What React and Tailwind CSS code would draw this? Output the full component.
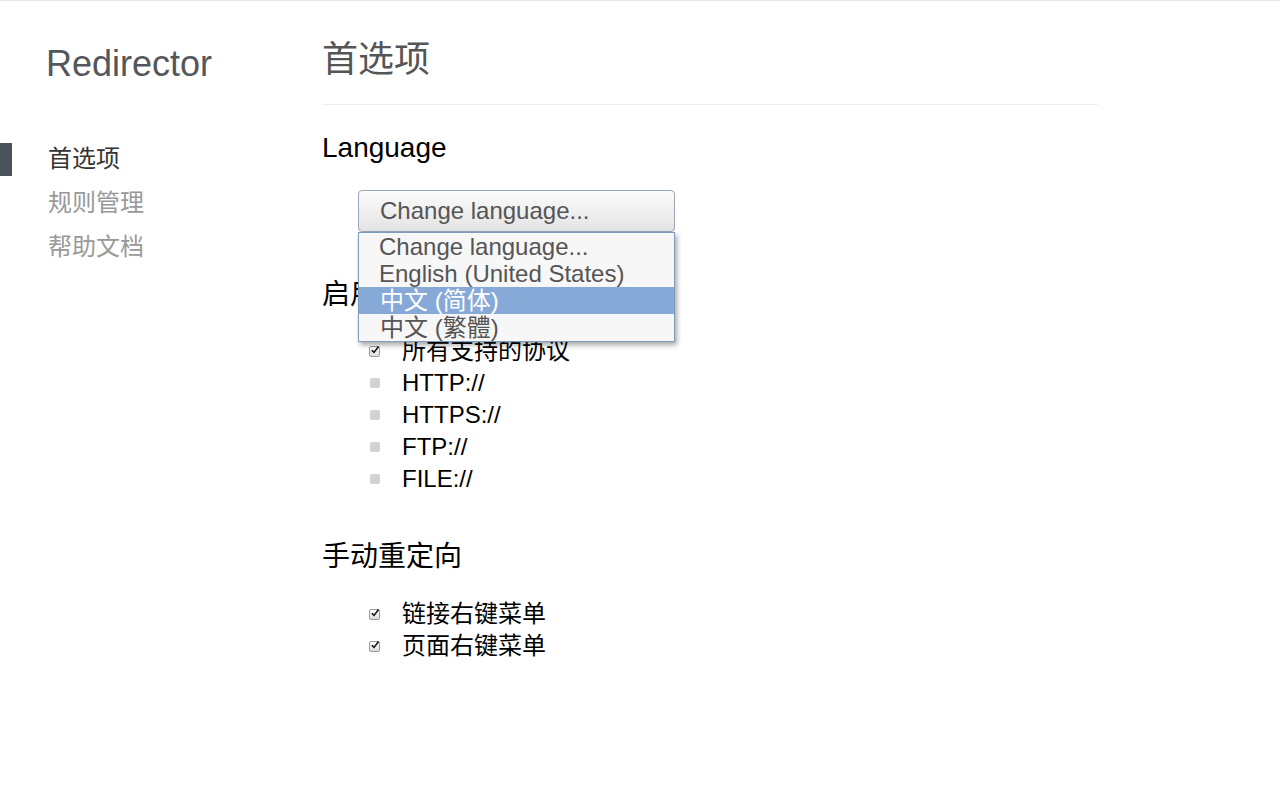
const FONT = { fontFamily: '"Liberation Sans", "Noto Sans CJK SC", Arial, sans-serif' };

const protocols = [
  { label: '所有支持的协议', checked: true },
  { label: 'HTTP://', checked: false },
  { label: 'HTTPS://', checked: false },
  { label: 'FTP://', checked: false },
  { label: 'FILE://', checked: false },
];

const manual = ['链接右键菜单', '页面右键菜单'];

const languages = ['Change language...', 'English (United States)', '中文 (简体)', '中文 (繁體)'];

function CheckBox({ checked }) {
  if (!checked) {
    return <span className="block w-[10px] h-[10px] rounded-[2px] bg-[#d2d2d2]" />;
  }
  return (
    <span className="relative block w-[11px] h-[11px] rounded-[2px] border border-[#9a9a9a] bg-gradient-to-b from-[#ffffff] to-[#dcdcdc]">
      <svg className="absolute -top-[2px] left-0" width="10" height="10" viewBox="0 0 10 10">
        <path d="M1.8 5.2 L4 7.4 L8.6 1.6" fill="none" stroke="#111" strokeWidth="1.6" />
      </svg>
    </span>
  );
}

function NavItem({ active, children }) {
  return (
    <div className="flex items-center h-[44px]">
      <span className={`block w-[12px] h-[33px] ${active ? 'bg-[#4b535c]' : 'bg-transparent'}`} />
      <span className={`ml-[36px] text-[24px] leading-[44px] ${active ? 'text-[#333]' : 'text-[#999]'}`}>
        {children}
      </span>
    </div>
  );
}

function CheckRow({ label, checked }) {
  return (
    <li className="flex items-center h-[32px]">
      <span className="ml-[47px] w-[11px] flex justify-center">
        <CheckBox checked={checked} />
      </span>
      <span className="ml-[22px] text-[24px] leading-[32px] text-black">{label}</span>
    </li>
  );
}

export default function App() {
  return (
    <div className="min-h-[800px] bg-white border-t border-[#e6e6e6] flex" style={FONT}>
      {/* sidebar */}
      <aside className="w-[322px] shrink-0 pt-[43px]">
        <h1 className="pl-[46px] text-[36px] leading-[40px] text-[#53575c]">Redirector</h1>
        <nav className="mt-[53px]">
          <NavItem active>首选项</NavItem>
          <NavItem>规则管理</NavItem>
          <NavItem>帮助文档</NavItem>
        </nav>
      </aside>

      {/* main */}
      <main className="w-[776px] pt-[39px]">
        <h1 className="text-[36px] leading-[40px] text-[#555]">首选项</h1>
        <div className="mt-[24px] h-px bg-[#eeeeee]" />

        <h2 className="mt-[27px] text-[28px] leading-[32px] text-black">Language</h2>
        <div className="relative ml-[36px] mt-[26px] w-[317px]">
          <div className="h-[42px] rounded-[4px] border border-[#9aa6b5] bg-gradient-to-b from-[#fbfbfb] to-[#e4e4e4] pl-[21px] text-[24px] leading-[40px] text-[#555]">
            Change language...
          </div>
          <ul className="absolute left-0 top-[42px] z-10 w-[317px] border border-[#7e9cbc] bg-[#f7f7f7] shadow-[2px_3px_5px_rgba(0,0,0,0.35)]">
            {languages.map((l, i) => (
              <li
                key={l}
                className={`h-[27px] text-[24px] leading-[27px] ${
                  i === 2 ? 'bg-[#87a9d8] text-white pl-[21px]' : i === 3 ? 'text-[#555] pl-[21px]' : 'text-[#555] pl-[20px]'
                }`}
              >
                {l}
              </li>
            ))}
          </ul>
        </div>

        <h2 className="mt-[47px] text-[28px] leading-[32px] text-black">启用协议</h2>
        <ul className="mt-[24px]">
          {protocols.map((p) => (
            <CheckRow key={p.label} label={p.label} checked={p.checked} />
          ))}
        </ul>

        <h2 className="mt-[46px] text-[28px] leading-[32px] text-black">手动重定向</h2>
        <ul className="mt-[25px]">
          {manual.map((m) => (
            <CheckRow key={m} label={m} checked />
          ))}
        </ul>
      </main>
    </div>
  );
}
